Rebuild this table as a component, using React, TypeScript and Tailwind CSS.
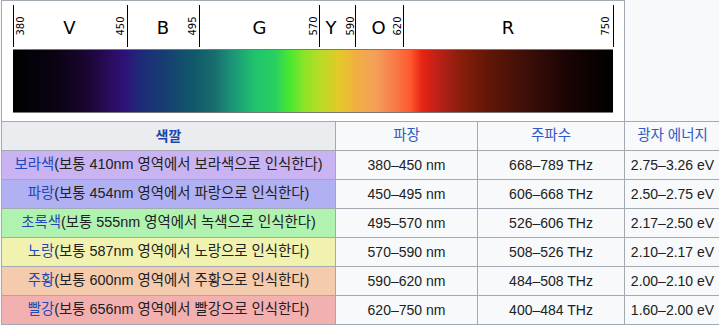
const rows = [
  { name: '보라색', rest: '(보통 410nm 영역에서 보라색으로 인식한다)', bg: 'bg-[#c9b3f2]', nm: '380–450 nm', thz: '668–789 THz', ev: '2.75–3.26 eV' },
  { name: '파랑', rest: '(보통 454nm 영역에서 파랑으로 인식한다)', bg: 'bg-[#b0b0f2]', nm: '450–495 nm', thz: '606–668 THz', ev: '2.50–2.75 eV' },
  { name: '초록색', rest: '(보통 555nm 영역에서 녹색으로 인식한다)', bg: 'bg-[#b0f2b0]', nm: '495–570 nm', thz: '526–606 THz', ev: '2.17–2.50 eV' },
  { name: '노랑', rest: '(보통 587nm 영역에서 노랑으로 인식한다)', bg: 'bg-[#f2f2b0]', nm: '570–590 nm', thz: '508–526 THz', ev: '2.10–2.17 eV' },
  { name: '주황', rest: '(보통 600nm 영역에서 주황으로 인식한다)', bg: 'bg-[#f4cbad]', nm: '590–620 nm', thz: '484–508 THz', ev: '2.00–2.10 eV' },
  { name: '빨강', rest: '(보통 656nm 영역에서 빨강으로 인식한다)', bg: 'bg-[#f2b0b0]', nm: '620–750 nm', thz: '400–484 THz', ev: '1.60–2.00 eV' },
];

// page x of tick lines, label centre x
const ticks = [
  { x: 13, label: '380', lx: 20 },
  { x: 127, label: '450', lx: 120 },
  { x: 199, label: '495', lx: 192.5 },
  { x: 319, label: '570', lx: 313.5 },
  { x: 355, label: '590', lx: 350 },
  { x: 403, label: '620', lx: 397.5 },
  { x: 613, label: '750', lx: 605 },
];

const bands = [
  { l: 'V', x: 69.5 },
  { l: 'B', x: 163 },
  { l: 'G', x: 259.5 },
  { l: 'Y', x: 331 },
  { l: 'O', x: 378.5 },
  { l: 'R', x: 508 },
];

const stops: [number, string][] = [
  [13, '#000000'], [60, '#0c0416'], [90, '#1c0636'], [110, '#2a0c5e'], [125, '#2e1278'],
  [140, '#1e2a78'], [165, '#163e72'], [195, '#115a6a'], [215, '#186e6e'], [235, '#1c9a78'],
  [255, '#20c46c'], [275, '#28d060'], [290, '#4ae830'], [305, '#8ee428'], [320, '#b8dc24'],
  [340, '#e6c828'], [355, '#f0b040'], [375, '#f4a058'], [395, '#f87a48'], [410, '#ff5a2e'],
  [422, '#e82414'], [440, '#b82018'], [460, '#8a1e0c'], [490, '#601606'], [530, '#3a0e08'],
  [570, '#180404'], [613, '#000000'],
];

function Spectrum() {
  // svg origin sits at page (2, 1)
  return (
    <svg width={622} height={120} className="block">
      <defs>
        <linearGradient id="spec" x1="0" x2="1" y1="0" y2="0">
          {stops.map(([x, c]) => (
            <stop key={x} offset={(x - 13) / 600} stopColor={c} />
          ))}
        </linearGradient>
      </defs>
      {ticks.map((t) => (
        <g key={t.label}>
          <line x1={t.x - 1.5} x2={t.x - 1.5} y1={4} y2={46} stroke="#000" strokeWidth={1} />
          <text
            x={0}
            y={0}
            fontFamily="DejaVu Sans, sans-serif"
            fontSize={10}
            textAnchor="middle"
            dominantBaseline="central"
            transform={`translate(${t.lx - 2} 25) rotate(-90)`}
          >
            {t.label}
          </text>
        </g>
      ))}
      {bands.map((b) => (
        <text
          key={b.l}
          x={b.x - 2}
          y={33}
          fontFamily="DejaVu Sans, sans-serif"
          fontSize={18}
          textAnchor="middle"
        >
          {b.l}
        </text>
      ))}
      <rect x={11} y={48} width={600} height={64} fill="url(#spec)" />
      <line x1={11} x2={611} y1={48.5} y2={48.5} stroke="#777" strokeWidth={1} />
      <line x1={11} x2={611} y1={111.5} y2={111.5} stroke="#777" strokeWidth={1} />
    </svg>
  );
}

export default function App() {
  const cell = 'h-[29px] flex items-center justify-center border-r border-b border-[#a2a9b1]';
  return (
    <div
      className="w-[719px] h-[325px] overflow-hidden bg-[#f8f9fa] text-[14px] text-[#202122]"
      style={{ fontFamily: '"Liberation Sans", "Noto Sans CJK KR", sans-serif' }}
    >
      <div className="ml-px w-[624px] h-[121px] bg-white border-t border-l border-r border-[#a2a9b1]">
        <Spectrum />
      </div>
      <div className="ml-px w-[720px] grid grid-cols-[334px_142px_147px_96px] border-t border-l border-[#a2a9b1]">
        <div className={`${cell} bg-[#eaecf0] font-bold text-[#1d45b0]`}>색깔</div>
        <div className={`${cell} text-[#3358c6] text-[14.5px]`}>파장</div>
        <div className={`${cell} text-[#3358c6] text-[14.5px]`}>주파수</div>
        <div className={`${cell} text-[#3358c6] text-[14.5px]`}>광자 에너지</div>
        {rows.map((r) => (
          <div key={r.name} className="contents">
            <div className={`${cell} ${r.bg} whitespace-nowrap text-[14.4px]`}>
              <span className="text-[#2447b8]">{r.name}</span>
              <span>{r.rest}</span>
            </div>
            <div className={cell}>{r.nm}</div>
            <div className={cell}>{r.thz}</div>
            <div className={cell}>{r.ev}</div>
          </div>
        ))}
      </div>
    </div>
  );
}
